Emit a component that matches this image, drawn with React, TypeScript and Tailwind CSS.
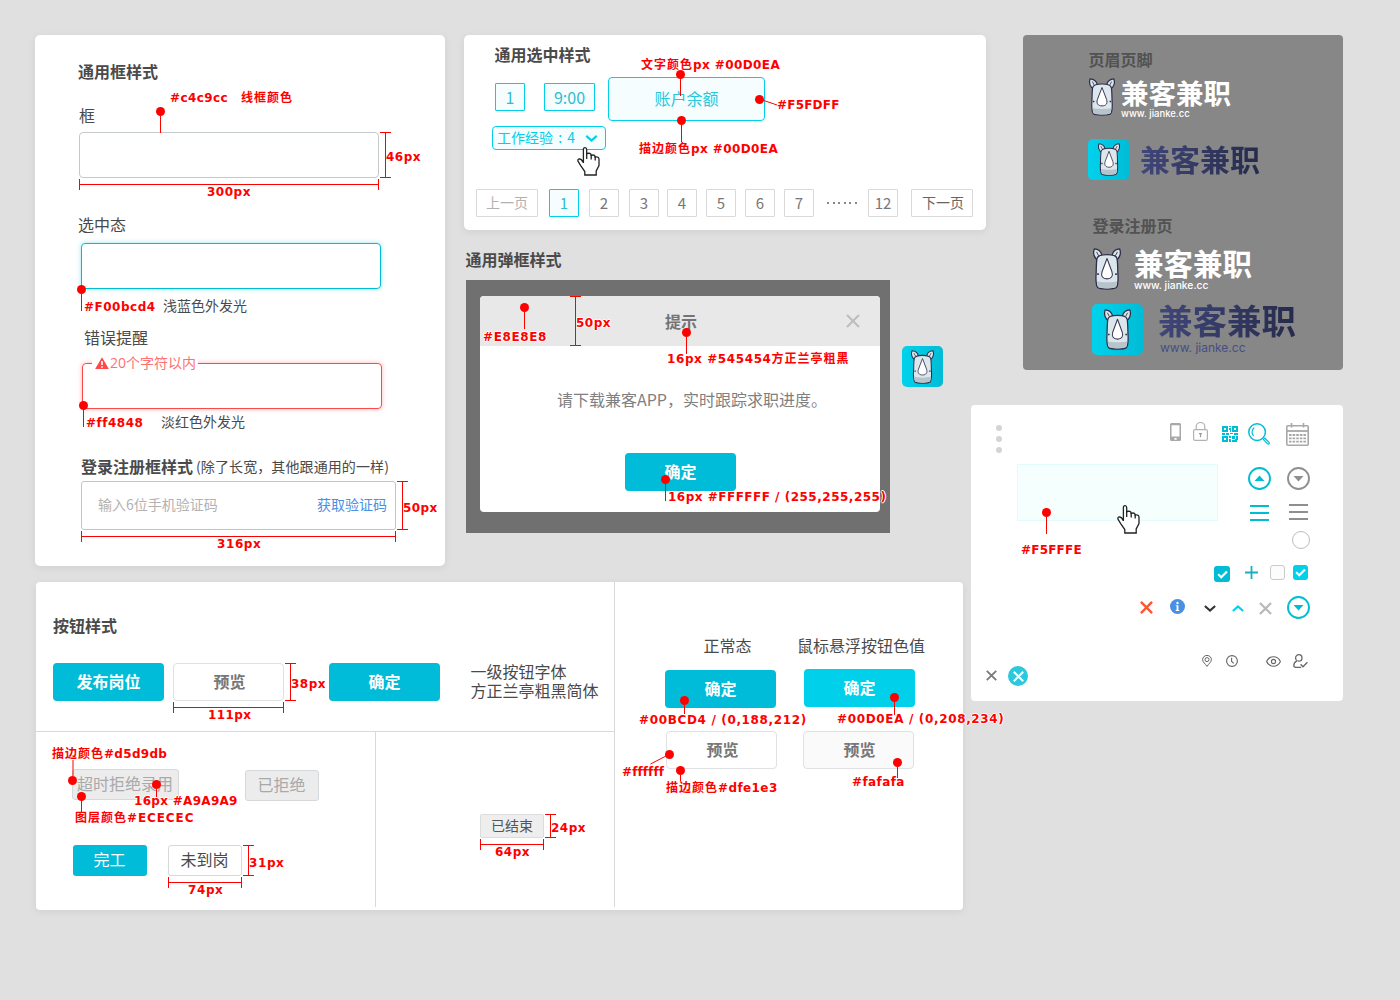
import React from 'react';

type Box = { className?: string; children?: React.ReactNode };

/* ---------- text ---------- */

const Heading = ({ className = '', children }: Box) => (
  <h2 className={`whitespace-nowrap text-[16px] leading-[16px] font-bold text-[#4a4a4a] ${className}`}>{children}</h2>
);

const Label = ({ className = '', children }: Box) => (
  <p className={`whitespace-nowrap text-[16px] leading-[16px] text-[#4a4a4a] ${className}`}>{children}</p>
);

const Small = ({ className = '', children }: Box) => (
  <p className={`whitespace-nowrap text-[14px] leading-[14px] text-[#4a4a4a] ${className}`}>{children}</p>
);

/* ---------- annotations ---------- */

const Note = ({ className = '', children }: Box) => (
  <span
    className={`absolute whitespace-pre font-['DejaVu_Sans','Noto_Sans_CJK_SC',sans-serif] text-[12px] leading-[12px] font-bold text-[#ff0000] [text-shadow:1px_0_#fff,-1px_0_#fff,0_1px_#fff,0_-1px_#fff] ${className}`}
  >
    {children}
  </span>
);

const Zh = ({ children }: Box) => <span className="tracking-[1px]">{children}</span>;

const Pin = ({ className = '', up = false }: { className?: string; up?: boolean }) => (
  <span className={`absolute flex w-[9px] items-center ${up ? 'flex-col-reverse' : 'flex-col'} ${className}`}>
    <span className="size-[9px] shrink-0 rounded-full bg-[#ff0000]" />
    <span className={`flex-1 ${up ? 'w-[2px] bg-[#ff0000]/50' : 'w-px bg-[#ff0000]'}`} />
  </span>
);

const HDim = ({ className = '' }: Box) => (
  <span className={`absolute flex h-[11px] items-center border-x border-[#ff0000] ${className}`}>
    <span className="h-px w-full bg-[#ff0000]" />
  </span>
);

const VDim = ({ className = '' }: Box) => (
  <span className={`absolute flex w-[11px] justify-center border-y border-[#ff0000] ${className}`}>
    <span className="h-full w-px bg-[#ff0000]" />
  </span>
);

/* ---------- buttons ---------- */

const Button = ({ className = '', children }: Box) => (
  <button
    className={`flex h-[38px] w-[111px] shrink-0 items-center justify-center rounded-[4px] pb-[3px] text-[16px] leading-[16px] font-bold ${className}`}
  >
    {children}
  </button>
);

const Tag = ({ className = '', children }: Box) => (
  <button
    className={`flex h-[31px] shrink-0 items-center justify-center rounded-[3px] pr-px pb-[3px] text-[16px] leading-[16px] whitespace-nowrap ${className}`}
  >
    {children}
  </button>
);

const Page = ({ className = '', children }: Box) => (
  <button
    className={`flex h-[28px] shrink-0 items-center justify-center rounded-[1px] border pb-[2px] whitespace-nowrap ${className}`}
  >
    {children}
  </button>
);

/* ---------- drawings ---------- */

const Rhino = ({ className = '' }: Box) => (
  <svg viewBox="0 0 26 38" preserveAspectRatio="none" className={`shrink-0 ${className}`} fill="none" stroke="#2f2e49" strokeWidth="1.2" strokeLinejoin="round">
    <path d="M5 11C1 9.800-.3 4.500 1.200.8 4.800 1 7.400 3.200 8.200 6.200Z" fill="#dbe6ec" />
    <path d="M21 11C25 9.800 26.300 4.500 24.800.8 21.200 1 18.600 3.200 17.800 6.200Z" fill="#dbe6ec" />
    <path d="M3.300 3.500L5.200 7M22.700 3.500L20.800 7" strokeWidth=".8" />
    <path d="M3.700 9.500C4.800 4.800 21.200 4.800 22.300 9.500 23 13 22.900 19 23.100 23.500 23.400 26 23.300 28 23.100 30.500 23 33 22.600 34.800 21.600 35.800 19 37.600 7 37.600 4.400 35.800 3.400 34.800 3 33 2.900 30.500 2.700 28 2.600 26 2.900 23.500 3.100 19 3 13 3.700 9.500Z" fill="#dce7ed" />
    <path d="M3.600 30C8 31.200 18 31.200 22.400 30L21.400 35.200C18 36.800 8 36.800 4.600 35.200Z" fill="#b7c4cc" stroke="none" />
    <path d="M13 9.500L17.600 21.500C18.900 25.500 16.900 27.900 13 27.900S7.100 25.500 8.400 21.500Z" fill="#fff" stroke="#3a3955" strokeWidth="1" />
    <path d="M3.900 23.600h1.500M20.600 23.600h1.500" strokeWidth="1.500" />
  </svg>
);

const Tile = ({ className = '', children }: Box) => (
  <div className={`flex shrink-0 items-center justify-center rounded-[5px] bg-linear-to-r from-[#00d2ec] to-[#00bcd6] ${className}`}>
    {children}
  </div>
);

const Hand = ({ className = '' }: Box) => (
  <svg viewBox="0 0 23 29" className={`absolute h-[29px] w-[23px] ${className}`} stroke="#222" strokeWidth="1.300" fill="#fff">
    <path d="M6.400 16V2.600Q6.400.7 8 .7T9.700 2.600V6.600Q13.700 5.400 14.200 8.300 17.600 7.200 18.200 10 22 9.400 22 12.500V18.500L19.200 24V28H7.800V24.500L4.200 19.500 1 14.200Q.4 12 2.400 11.900 4.600 12 6.400 15.600" />
    <path d="M9.700 6V12M14.200 8V12.500M18.200 9.800V13.500" fill="none" />
  </svg>
);

const Cross = ({ className = '', w = 2 }: { className?: string; w?: number }) => (
  <svg viewBox="0 0 14 14" className={`shrink-0 ${className}`} stroke="currentColor" strokeWidth={w}>
    <path d="M1 1l12 12M13 1L1 13" />
  </svg>
);

const Chevron = ({ className = '' }: Box) => (
  <svg viewBox="0 0 14 8" className={`shrink-0 ${className}`} stroke="currentColor" strokeWidth="2.400" fill="none">
    <path d="M1 1l6 5.400L13 1" />
  </svg>
);

const CircleCaret = ({ className = '' }: Box) => (
  <svg viewBox="0 0 23 23" className={`size-[23px] shrink-0 ${className}`}>
    <circle cx="11.500" cy="11.500" r="10.500" fill="none" stroke="currentColor" strokeWidth="1.900" />
    <path d="M6.500 9h10l-5 5.500z" fill="currentColor" />
  </svg>
);

const Menu = ({ className = '' }: Box) => (
  <svg viewBox="0 0 19 16" className={`h-[16px] w-[19px] shrink-0 ${className}`} stroke="currentColor" strokeWidth="2">
    <path d="M0 1h19M0 8h19M0 15h19" />
  </svg>
);

const Check = ({ className = '' }: Box) => (
  <span className={`flex shrink-0 items-center justify-center rounded-[3px] ${className}`}>
    <svg viewBox="0 0 12 10" className="h-[9px] w-[11px]" fill="none" stroke="#fff" strokeWidth="2.400">
      <path d="M1.200 4.800L4.600 8 11 1.600" />
    </svg>
  </span>
);

const Phone = ({ className = '' }: Box) => (
  <svg viewBox="0 0 11 18" className={`h-[18px] w-[11px] shrink-0 ${className}`}>
    <path fillRule="evenodd" fill="#a8a8a8" d="M1.500 0h8A1.500 1.500 0 0 1 11 1.500v15A1.500 1.500 0 0 1 9.500 18h-8A1.500 1.500 0 0 1 0 16.500v-15A1.500 1.500 0 0 1 1.500 0zM1.500 2.200v11.300h8V2.200zM4.400 15v1.800h2.200V15z" />
  </svg>
);

const Lock = ({ className = '' }: Box) => (
  <svg viewBox="0 0 15 19" className={`h-[19px] w-[15px] shrink-0 ${className}`} fill="none" stroke="#b2b2b2" strokeWidth="1.200">
    <rect x=".6" y="7.600" width="13.800" height="10.800" rx="1.500" />
    <path d="M3.200 7.600V4.800a4.300 4.300 0 0 1 8.600 0v2.800" />
    <path d="M7.500 11v4.200M6 11.600h3" stroke="#999" />
  </svg>
);

const Qr = ({ className = '' }: Box) => (
  <svg viewBox="0 0 16 16" className={`size-[16px] shrink-0 ${className}`} fill="#00bcd4" fillRule="evenodd" shapeRendering="crispEdges">
    <path d="M0 0h6v6H0zM2 2v2h2V2zM10 0h6v6h-6zM12 2v2h2V2zM0 10h6v6H0zM2 12v2h2v-2z" />
    <path d="M7 0h2v1H7zM7 2h2v4H8V4H7zM0 7h3v2H0zM4 7h3v2H4zM8 7h3v1H8zM12 7h4v2h-4zM7 10h2v2H7zM7 13h2v3H7zM10 10h3v3h-3zM14 10h2v4h-1v2h-5v-2h3v-1h1z" />
  </svg>
);

const Search = ({ className = '' }: Box) => (
  <svg viewBox="0 0 22 22" className={`size-[22px] shrink-0 ${className}`} fill="none" stroke="#00bcd4" strokeWidth="1.500">
    <circle cx="9.100" cy="9.100" r="8.300" />
    <path d="M6.200 4.800C3.500 7 3.300 10.500 5.600 13" strokeWidth="1.200" />
    <path d="M15.400 16.600l1.400-1.400 4.300 4.200c.7.900-.6 2.200-1.500 1.500z" strokeWidth="1.200" />
  </svg>
);

const CalendarIcon = ({ className = '' }: Box) => (
  <svg viewBox="0 0 23 23" className={`size-[23px] shrink-0 ${className}`} fill="none" stroke="#a8a8a8">
    <rect x=".8" y="2.800" width="21.400" height="19.400" rx="1" strokeWidth="1.600" />
    <path d="M1 8h21" strokeWidth="1.800" />
    <path d="M5.500 0v4.500M17.500 0v4.500" strokeWidth="1.600" />
    <path d="M3 12h17M3 15.300h17M3 18.700h17" strokeWidth="1.800" strokeDasharray="2.600 1" />
  </svg>
);

const Info = ({ className = '' }: Box) => (
  <svg viewBox="0 0 15 15" className={`size-[15px] shrink-0 ${className}`}>
    <circle cx="7.500" cy="7.500" r="7.500" fill="#4a90e2" />
    <circle cx="7.500" cy="4" r="1.200" fill="#fff" />
    <path d="M5.800 6.200h2.600v4.900h.9v.9H5.700v-.9h.9V7.100h-.8z" fill="#fff" />
  </svg>
);

const MapPin = ({ className = '' }: Box) => (
  <svg viewBox="0 0 10 12" className={`h-[12px] w-[10px] shrink-0 ${className}`} fill="none" stroke="#666" strokeWidth="1">
    <path d="M5 11.400C3.500 8.800.6 7.300.6 4.600a4.400 4.200 0 0 1 8.800 0C9.400 7.300 6.500 8.800 5 11.400Z" />
    <circle cx="5" cy="4.600" r="2" />
  </svg>
);

const Clock = ({ className = '' }: Box) => (
  <svg viewBox="0 0 12 12" className={`size-[12px] shrink-0 ${className}`} fill="none" stroke="#666" strokeWidth="1.100">
    <circle cx="6" cy="6" r="5.400" />
    <path d="M5.600 2.800v3.700L7.800 8.400" />
  </svg>
);

const Eye = ({ className = '' }: Box) => (
  <svg viewBox="0 0 15 11" className={`h-[11px] w-[15px] shrink-0 ${className}`} fill="none" stroke="#666" strokeWidth="1.100">
    <path d="M.6 5.500C3.500-.8 11.500-.8 14.400 5.500 11.500 11.800 3.500 11.800.6 5.500Z" />
    <circle cx="7.500" cy="5.500" r="2.100" />
  </svg>
);

const UserCheck = ({ className = '' }: Box) => (
  <svg viewBox="0 0 15 14" className={`h-[14px] w-[15px] shrink-0 ${className}`} fill="none" stroke="#666" strokeWidth="1.300">
    <circle cx="5.800" cy="3.900" r="3.200" />
    <path d="M3.800 6.800C1.500 8 .8 9.800.8 11.600c0 1.200.9 1.700 2 1.700h5.400" />
    <path d="M7.600 10.300l2.400 2.500 4.400-4.600" />
  </svg>
);

/* ---------- brand lockup ---------- */

const darkInk = 'bg-linear-to-r from-[#40477a] to-[#262b4c] bg-clip-text text-transparent';

/* ---------- panels ---------- */

const panel = 'bg-white shadow-[0_2px_8px_rgba(0,0,0,0.07)]';

function FieldPanel() {
  return (
    <section className={`h-[531px] w-[410px] shrink-0 rounded-[5px] pt-[28px] pl-[43px] ${panel}`}>
      <Heading>通用框样式</Heading>
      <Label className="mt-[28px] ml-px">框</Label>
      <div className="mt-[9px] ml-px h-[46px] w-[300px] rounded-[4px] border border-[#c4c9cc]" />
      <Label className="mt-[38px]">选中态</Label>
      <div className="mt-[11px] ml-[3px] h-[46px] w-[300px] rounded-[4px] border border-[#00bcd4] shadow-[0_0_5px_rgba(0,188,212,0.4)]" />
      <Small className="mt-[9px] ml-[85px]">浅蓝色外发光</Small>
      <Label className="mt-[17px] ml-[6px]">错误提醒</Label>
      <div className="mt-[18px] ml-[4px] h-[46px] w-[300px] rounded-[4px] border border-[#ff4848] pl-[9px] shadow-[0_0_5px_rgba(255,72,72,0.4)]">
        <div className="-mt-[9px] flex h-[15px] w-[106px] items-center bg-white pl-[3px]">
          <svg viewBox="0 0 14 12" className="h-[12px] w-[14px]">
            <path d="M7 0.300L13.900 12H.1z" fill="#ff4848" />
            <path d="M7 4v4M7 9.200v1.500" stroke="#fff" strokeWidth="1.600" />
          </svg>
          <p className="ml-px font-['Open_Sans','Noto_Sans_CJK_SC',sans-serif] text-[14px] leading-[14px] whitespace-nowrap text-[#ff7070]">20个字符以内</p>
        </div>
      </div>
      <Small className="mt-[5px] ml-[83px]">淡红色外发光</Small>
      <div className="mt-[30px] ml-[3px] flex items-center">
        <Heading>登录注册框样式</Heading>
        <Small className="ml-[3px] tracking-[0.1px]">(除了长宽，其他跟通用的一样)</Small>
      </div>
      <div className="mt-[7px] ml-[3px] flex h-[49px] w-[315px] items-center justify-between rounded-[3px] border border-[#c4c4c4] pr-[8px] pb-[4px] pl-[16px]">
        <Small className="text-[#b2b2b2]">输入6位手机验证码</Small>
        <Small className="text-[#4a90e2]">获取验证码</Small>
      </div>
    </section>
  );
}

function SelectionPanel() {
  return (
    <section className={`h-[195px] w-[522px] rounded-[5px] pt-[11px] ${panel}`}>
      <Heading className="ml-[30.500px]">通用选中样式</Heading>
      <div className="mt-[15px] ml-[28px] flex">
        <div className="w-[116px] pt-[6px]">
          <div className="ml-[3px] flex gap-[19px] text-[16px] leading-[16px] text-[#2fbdd0]">
            <span className="flex h-[28px] w-[30px] items-center justify-center rounded-[1px] border border-[#00d0ea] bg-[#f5fdff]">1</span>
            <span className="flex h-[28px] w-[51px] items-center justify-center rounded-[1px] border border-[#00d0ea] bg-[#f5fdff]">9:00</span>
          </div>
          <div className="mt-[15px] flex h-[24px] w-[114px] items-center justify-between rounded-[4px] border border-[#00d0ea] bg-[#f5fdff] pr-[7px] pl-[4px] text-[#00d0ea]">
            <span className="pb-[2px] text-[14px] leading-[14px] [word-spacing:2px]">工作经验 : 4</span>
            <Chevron className="h-[7px] w-[13px]" />
          </div>
        </div>
        <div className="flex h-[44px] w-[157px] items-center justify-center rounded-[4px] border border-[#00d0ea] bg-[#f5fdff] pb-[2px] text-[16px] leading-[16px] text-[#25c8dc]">
          账户余额
        </div>
      </div>
      <nav className="mt-[39px] ml-[12px] flex items-center text-[15px] leading-[15px] text-[#777]">
        <Page className="w-[62px] border-[#d9d9d9] text-[14px] text-[#b2b2b2]">上一页</Page>
        <Page className="ml-[11px] w-[30px] border-[#00d0ea] bg-[#f5fdff] text-[#2fbdd0]">1</Page>
        <Page className="ml-[10px] w-[30px] border-[#d9d9d9]">2</Page>
        <Page className="ml-[10px] w-[30px] border-[#d9d9d9]">3</Page>
        <Page className="ml-[8px] w-[30px] border-[#d9d9d9]">4</Page>
        <Page className="ml-[9px] w-[30px] border-[#d9d9d9]">5</Page>
        <Page className="ml-[9px] w-[30px] border-[#d9d9d9]">6</Page>
        <Page className="ml-[9px] w-[30px] border-[#d9d9d9]">7</Page>
        <span className="ml-[13px] flex w-[30px] justify-between">
          <i className="size-[2px] bg-[#888]" /><i className="size-[2px] bg-[#888]" /><i className="size-[2px] bg-[#888]" />
          <i className="size-[2px] bg-[#888]" /><i className="size-[2px] bg-[#888]" /><i className="size-[2px] bg-[#888]" />
        </span>
        <Page className="ml-[11px] w-[30px] border-[#d9d9d9]">12</Page>
        <Page className="ml-[13px] w-[62px] border-[#d9d9d9] pl-[2px] text-[14px] text-[#666]">下一页</Page>
      </nav>
    </section>
  );
}

function DialogSample() {
  return (
    <div className="mt-[13px] ml-[2px] flex">
      <div className="h-[253px] w-[424px] bg-[#707070] px-[14px] pt-[16px]">
        <div className="h-[216px] w-[400px] overflow-hidden rounded-[4px] bg-white">
          <header className="flex h-[50px] items-center bg-[#e8e8e8] pr-[20px]">
            <h3 className="ml-[185px] text-[16px] leading-[16px] font-bold text-[#747474]">提示</h3>
            <Cross className="ml-auto size-[14px] text-[#bdbdbd]" />
          </header>
          <p className="mt-[45px] ml-[77px] text-[16px] leading-[16px] whitespace-nowrap text-[#808080]">请下载兼客APP，实时跟踪求职进度。</p>
          <Button className="mt-[46px] ml-[145px] bg-[#00bcd8] text-white">确定</Button>
        </div>
      </div>
      <Tile className="mt-[66px] ml-[12px] size-[41px]">
        <Rhino className="h-[34px] w-[23px]" />
      </Tile>
    </div>
  );
}

function ButtonPanel() {
  return (
    <section className={`mt-[16px] ml-px flex h-[328px] w-[927px] rounded-[4px] ${panel}`}>
      <div className="h-[325px] w-[579px] border-r border-[#d9d9d9]">
        <div className="h-[150px] border-b border-[#d9d9d9] pt-[35px]">
          <Heading className="ml-[17px]">按钮样式</Heading>
          <div className="mt-[30px] ml-[17px] flex">
            <Button className="bg-[#00bcd8] text-white">发布岗位</Button>
            <Button className="ml-[9px] border border-[#dfe1e3] bg-white pl-[2px] text-[#777]">预览</Button>
            <Button className="ml-[45px] bg-[#00bcd8] text-white">确定</Button>
            <p className="-mt-px ml-[30.500px] text-[16px] leading-[19px] whitespace-nowrap text-[#4a4a4a]">
              一级按钮字体<br />方正兰亭粗黑简体
            </p>
          </div>
        </div>
        <div className="flex h-[175px]">
          <div className="w-[340px] border-r border-[#d9d9d9] pt-[37px] pl-[36px]">
            <div className="flex">
              <Tag className="w-[107px] border border-[#d5d9db] bg-[#ececec] text-[#a9a9a9]">超时拒绝录用</Tag>
              <Tag className="mt-px ml-[66px] w-[74px] border border-[#d5d9db] bg-[#ececec] text-[#a9a9a9]">已拒绝</Tag>
            </div>
            <div className="mt-[44px] ml-px flex gap-[21px]">
              <Tag className="w-[74px] bg-[#00bcd8] text-white">完工</Tag>
              <Tag className="w-[74px] border border-[#d5d9db] bg-white text-[#4a4a4a]">未到岗</Tag>
            </div>
          </div>
          <div className="pt-[82px] pl-[104px]">
            <button className="flex h-[24px] w-[64px] items-center justify-center rounded-[2px] border border-[#dcdcdc] bg-[#eee] pb-[2px] text-[14px] leading-[14px] text-[#555]">已结束</button>
          </div>
        </div>
      </div>
      <div className="flex gap-[21px] pt-[55px] pl-[50px]">
        <div className="w-[112px]">
          <Label className="ml-[38.500px]">正常态</Label>
          <Button className="mt-[17px] bg-[#00bcd8] text-white">确定</Button>
          <Button className="mt-[23px] ml-px border border-[#dfe1e3] bg-white pl-[2px] text-[#777]">预览</Button>
        </div>
        <div className="w-[130px]">
          <Label className="-ml-px">鼠标悬浮按钮色值</Label>
          <Button className="mt-[16px] ml-[6px] bg-[#00d0ea] text-white">确定</Button>
          <Button className="mt-[24px] ml-[5px] border border-[#dfe1e3] bg-[#fafafa] pl-[2px] text-[#777]">预览</Button>
        </div>
      </div>
    </section>
  );
}

function LogoPanel() {
  return (
    <section className="h-[335px] w-[320px] rounded-[4px] bg-[#878787] pt-[16px] pl-[65px] whitespace-nowrap">
      <Heading className="ml-[0.500px] text-[#525252]">页眉页脚</Heading>
      <div className="mt-[11px] ml-px flex">
        <Rhino className="h-[38px] w-[26px]" />
        <div className="ml-[6px] text-white">
          <p className="-mt-px text-[27.500px] leading-[30px] font-bold">兼客兼职</p>
          <p className="mt-px font-['Inter',sans-serif] text-[9.500px] leading-[12px] font-medium">www. jianke.cc</p>
        </div>
      </div>
      <div className="mt-[19px] flex">
        <Tile className="size-[41px]">
          <Rhino className="h-[33px] w-[22px]" />
        </Tile>
        <p className={`-mt-px ml-[11px] h-[41px] text-[30px] leading-[41px] font-bold ${darkInk}`}>兼客兼职</p>
      </div>
      <Heading className="mt-[37px] ml-[4.500px] text-[#525252]">登录注册页</Heading>
      <div className="mt-[15px] ml-[5px] flex">
        <Rhino className="h-[42px] w-[28px]" />
        <div className="ml-[13px] text-white">
          <p className="-mt-px text-[29.500px] leading-[30px] font-bold">兼客兼职</p>
          <p className="mt-[2px] font-['Inter',sans-serif] text-[10.300px] leading-[13px] font-medium">www. jianke.cc</p>
        </div>
      </div>
      <div className="mt-[12px] ml-[4px] flex">
        <Tile className="size-[51px]">
          <Rhino className="h-[41px] w-[27px]" />
        </Tile>
        <div className="-mt-[5px] ml-[15px]">
          <p className={`text-[34.500px] leading-[40px] font-bold ${darkInk}`}>兼客兼职</p>
          <p className="mt-[2px] ml-[2px] font-['Inter',sans-serif] text-[12px] leading-[14px] text-[#464e86]">www. jianke.cc</p>
        </div>
      </div>
    </section>
  );
}

function IconPanel() {
  return (
    <section className="mt-[35px] h-[296px] w-[372px] rounded-[4px] bg-white pt-[17px]">
      <div className="flex h-[42px] items-start">
        <div className="mt-[3px] ml-[25px] flex flex-col gap-[5px]">
          <i className="size-[6px] rounded-full bg-[#d4d4d4]" />
          <i className="size-[6px] rounded-full bg-[#d4d4d4]" />
          <i className="size-[6px] rounded-full bg-[#d4d4d4]" />
        </div>
        <Phone className="mt-px ml-[168px]" />
        <Lock className="ml-[12px]" />
        <Qr className="mt-[4px] ml-[14px]" />
        <Search className="mt-px ml-[10px]" />
        <CalendarIcon className="mt-px ml-[16px]" />
      </div>
      <div className="flex h-[101px]">
        <div className="ml-[46px] h-[57px] w-[201px] border border-[#e2fbfb] bg-[#f5fffe]" />
        <div className="mt-[3px] ml-[30px] w-[23px]">
          <CircleCaret className="rotate-180 text-[#00bcd4]" />
          <Menu className="mt-[15px] ml-[2px] text-[#00bcd4]" />
        </div>
        <div className="mt-[3px] ml-[16px] w-[23px]">
          <CircleCaret className="text-[#8f8f8f]" />
          <Menu className="mt-[14px] ml-[2px] text-[#8f8f8f]" />
          <i className="mt-[11px] ml-[5px] block size-[18px] rounded-full border border-[#bcbcbc]" />
        </div>
      </div>
      <div className="flex h-[31px] items-start">
        <Check className="mt-px ml-[243px] size-[16px] bg-[#00bcd4]" />
        <svg viewBox="0 0 13 13" className="mt-px ml-[15px] size-[13px]" stroke="#1aaec4" strokeWidth="1.800">
          <path d="M6.500 0v13M0 6.500h13" />
        </svg>
        <i className="ml-[12px] size-[15px] rounded-[3px] border border-[#c8cbcc] bg-[#fcfcfc]" />
        <Check className="ml-[8px] size-[15px] bg-[#00d0ea]" />
      </div>
      <div className="flex h-[58px] items-start">
        <Cross className="mt-[5px] ml-[169px] size-[13px] text-[#fa5732]" w={2.6} />
        <Info className="mt-[3px] ml-[17px]" />
        <Chevron className="mt-[9px] ml-[19px] h-[7px] w-[12px] text-[#333]" />
        <Chevron className="mt-[9px] ml-[16px] h-[7px] w-[12px] rotate-180 text-[#00d0ea]" />
        <Cross className="mt-[6px] ml-[15px] size-[13px] text-[#b9b9b9]" w={2.4} />
        <CircleCaret className="ml-[15px] text-[#00bcd4]" />
      </div>
      <div className="flex items-start">
        <Cross className="mt-[16px] ml-[15px] size-[11px] text-[#777]" w={2.2} />
        <span className="mt-[12px] ml-[11px] flex size-[20px] items-center justify-center rounded-full bg-[#2cc8dd]">
          <Cross className="size-[11px] text-white" w={2.6} />
        </span>
        <MapPin className="mt-px ml-[174px]" />
        <Clock className="mt-px ml-[14px]" />
        <Eye className="mt-[2px] ml-[28px]" />
        <UserCheck className="ml-[12px]" />
      </div>
    </section>
  );
}

/* ---------- measurement and colour call-outs drawn over the board ---------- */

function CallOuts() {
  return (
    <div className="pointer-events-none absolute inset-0 tracking-[0.4px]">
      <Hand className="top-[147px] left-[577px]" />
      <Hand className="top-[505px] left-[1117px]" />

      <svg viewBox="0 0 20 8" className="absolute top-[98px] left-[759px] h-[8px] w-[20px]" stroke="#ff0000"><path d="M2 1.500L18 7" /></svg>
      <svg viewBox="0 0 20 12" className="absolute top-[753px] left-[650px] h-[12px] w-[20px]" stroke="#ff0000"><path d="M19 1.500L.5 11" /></svg>

      <Note className="top-[92px] left-[170px]">#c4c9cc</Note>
      <Note className="top-[92px] left-[241px]"><Zh>线框颜色</Zh></Note>
      <Note className="top-[151px] left-[386px] tracking-[0.5px]">46px</Note>
      <Note className="top-[186px] left-[207px] tracking-[0.5px]">300px</Note>
      <Note className="top-[301px] left-[84px] tracking-[0.5px]">#F00bcd4</Note>
      <Note className="top-[417px] left-[86px] tracking-[0.5px]">#ff4848</Note>
      <Note className="top-[502px] left-[403px]">50px</Note>
      <Note className="top-[538px] left-[217px] tracking-[0.6px]">316px</Note>
      <Note className="top-[59px] left-[641px]"><Zh>文字颜色</Zh>px #00D0EA</Note>
      <Note className="top-[143px] left-[639px]"><Zh>描边颜色</Zh>px #00D0EA</Note>
      <Note className="top-[99px] left-[777px] tracking-[0.2px]">#F5FDFF</Note>
      <Note className="top-[331px] left-[483px] tracking-[0.6px]">#E8E8E8</Note>
      <Note className="top-[317px] left-[576px] tracking-[0.5px]">50px</Note>
      <Note className="top-[353px] left-[667px] tracking-[0.6px]">16px #545454<Zh>方正兰亭粗黑</Zh></Note>
      <Note className="top-[491px] left-[668px] tracking-[0.5px]">16px #FFFFFF / (255,255,255)</Note>
      <Note className="top-[544px] left-[1021px] tracking-[0.2px]">#F5FFFE</Note>
      <Note className="top-[678px] left-[291px] tracking-[0.5px]">38px</Note>
      <Note className="top-[709px] left-[208px]">111px</Note>
      <Note className="top-[748px] left-[52px] tracking-[0.3px]"><Zh>描边颜色</Zh>#d5d9db</Note>
      <Note className="top-[795px] left-[134px] tracking-[0.3px]">16px #A9A9A9</Note>
      <Note className="top-[812px] left-[75px] tracking-[0.9px]"><Zh>图层颜色</Zh>#ECECEC</Note>
      <Note className="top-[857px] left-[249px] tracking-[0.6px]">31px</Note>
      <Note className="top-[884px] left-[188px] tracking-[0.6px]">74px</Note>
      <Note className="top-[822px] left-[551px] tracking-[0.5px]">24px</Note>
      <Note className="top-[846px] left-[495px] tracking-[0.5px]">64px</Note>
      <Note className="top-[714px] left-[639px] tracking-[0.65px]">#00BCD4 / (0,188,212)</Note>
      <Note className="top-[713px] left-[837px] tracking-[0.65px]">#00D0EA / (0,208,234)</Note>
      <Note className="top-[766px] left-[622px] tracking-[0.1px]">#ffffff</Note>
      <Note className="top-[782px] left-[666px]"><Zh>描边颜色</Zh>#dfe1e3</Note>
      <Note className="top-[776px] left-[852px]">#fafafa</Note>

      <HDim className="top-[179px] left-[79px] w-[300px]" />
      <HDim className="top-[531px] left-[81px] w-[315px]" />
      <HDim className="top-[702px] left-[173px] w-[111px]" />
      <HDim className="top-[877px] left-[168px] w-[74px]" />
      <HDim className="top-[839px] left-[480px] w-[64px]" />
      <VDim className="top-[132px] left-[380px] h-[46px]" />
      <VDim className="top-[481px] left-[397px] h-[49px]" />
      <VDim className="top-[296px] left-[570px] h-[50px]" />
      <VDim className="top-[663px] left-[285px] h-[38px]" />
      <VDim className="top-[845px] left-[243px] h-[31px]" />
      <VDim className="top-[814px] left-[545px] h-[24px]" />

      <Pin className="top-[107px] left-[156px] h-[26px]" />
      <Pin className="top-[285px] left-[77px] h-[26px]" />
      <Pin className="top-[401px] left-[79px] h-[26px]" />
      <Pin className="top-[70px] left-[676px] h-[26px]" />
      <Pin className="top-[116px] left-[677px] h-[26px]" />
      <Pin className="top-[95px] left-[755px] h-[9px]" />
      <Pin className="top-[303px] left-[520px] h-[26px]" />
      <Pin className="top-[328px] left-[682px] h-[26px]" />
      <Pin className="top-[475px] left-[661px] h-[26px]" />
      <Pin className="top-[508px] left-[1042px] h-[26px]" />
      <Pin className="top-[696px] left-[680px] h-[18px]" />
      <Pin className="top-[693px] left-[890px] h-[22px]" />
      <Pin className="top-[750px] left-[665px] h-[9px]" />
      <Pin className="top-[766px] left-[676px] h-[15px]" />
      <Pin className="top-[758px] left-[893px] h-[20px]" />
      <Pin className="top-[760px] left-[68px] h-[25px]" up />
      <Pin className="top-[792px] left-[77px] h-[20px]" />
      <Pin className="top-[780px] left-[152px] h-[17px]" />
    </div>
  );
}

export default function App() {
  return (
    <main className="relative flex h-[1000px] w-[1400px] gap-[8px] overflow-hidden bg-[#e0e0e0] pt-[35px] pl-[35px] font-['Noto_Sans_CJK_SC',sans-serif]">
      <div className="w-[928px] shrink-0">
        <div className="flex h-[531px] gap-[19px]">
          <FieldPanel />
          <div className="shrink-0">
            <SelectionPanel />
            <Heading className="mt-[21px] ml-[1.500px]">通用弹框样式</Heading>
            <DialogSample />
          </div>
        </div>
        <ButtonPanel />
      </div>
      <div className="flex w-[372px] shrink-0 flex-col items-end">
        <LogoPanel />
        <IconPanel />
      </div>
      <CallOuts />
    </main>
  );
}
